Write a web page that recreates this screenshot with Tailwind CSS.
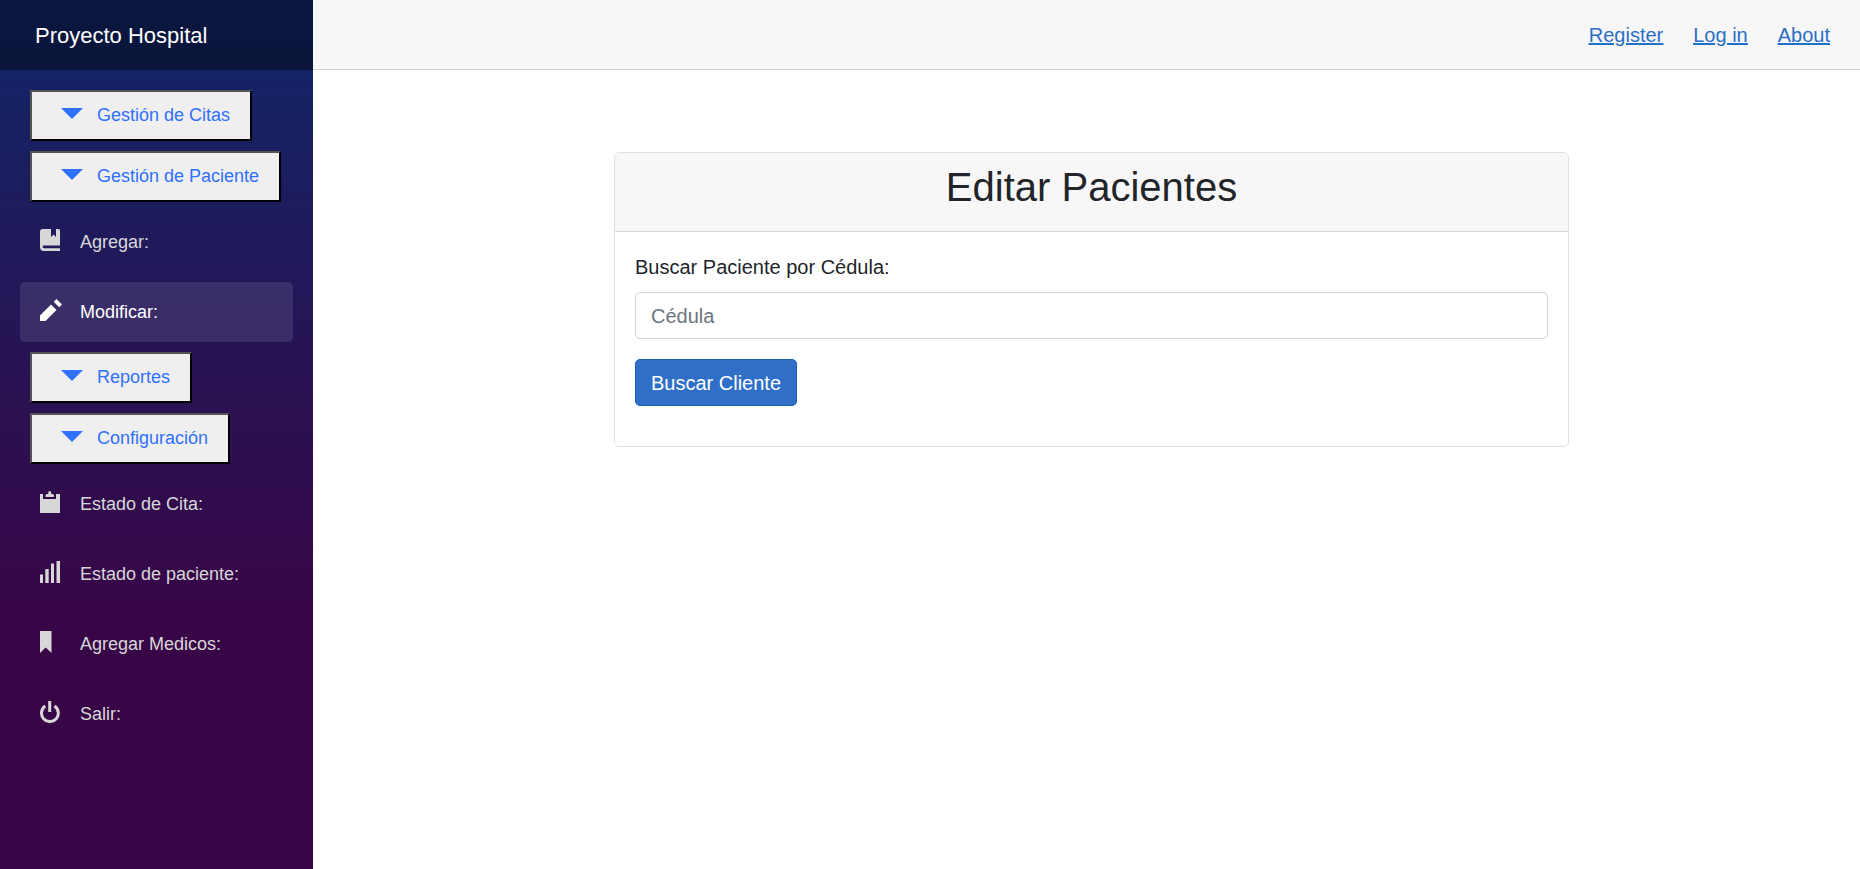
<!DOCTYPE html>
<html lang="es">
<head>
<meta charset="utf-8">
<title>Proyecto Hospital</title>
<script src="https://cdn.jsdelivr.net/npm/@tailwindcss/browser@4"></script>
</head>
<body class="flex h-screen overflow-hidden bg-white font-['Liberation_Sans',Arial,sans-serif] text-[20px] leading-[30px] text-[#212529]">
<aside class="flex w-[313px] shrink-0 flex-col bg-[linear-gradient(180deg,#0f2768_0%,#380647_70%)] text-[18px] text-[#d7d7d7]">
  <div class="flex h-[70px] shrink-0 items-center bg-black/40 pt-[2px] pl-[35px] text-[22px] text-white">Proyecto Hospital</div>
  <nav class="flex flex-col items-start gap-[10px] px-5 pt-5">
    <button class="ml-[10px] flex h-[51px] items-center border-2 border-black bg-[#efefef] pr-[20px] pb-[2px] pl-[29px] text-[#3070ff] [border-style:outset]"><svg class="mr-[14px] mb-[2px] h-[11px] w-[22px]" viewBox="0 0 8 4" fill="currentColor"><path d="M0 0l4 4 4-4z"/></svg>Gestión de Citas</button>
    <button class="ml-[10px] flex h-[51px] items-center border-2 border-black bg-[#efefef] pr-[20px] pb-[2px] pl-[29px] text-[#3070ff] [border-style:outset]"><svg class="mr-[14px] mb-[2px] h-[11px] w-[22px]" viewBox="0 0 8 4" fill="currentColor"><path d="M0 0l4 4 4-4z"/></svg>Gestión de Paciente</button>
    <a class="flex h-[60px] w-full items-center rounded-[5px] pl-5"><svg class="mr-[18px] mb-1 size-[22px]" viewBox="0 0 22 22" fill="currentColor"><path d="M2.5 0H11v8l2.6-2.6L16 8V0h2.500Q20 0 20 1.500V16.500H4a1.300 1.300 0 0 0 0 2.700H20V22H4Q0 22 0 18V3Q0 0 2.500 0z"/></svg>Agregar:</a>
    <a class="flex h-[60px] w-full items-center rounded-[5px] bg-white/10 pl-5 text-white"><svg class="mr-[18px] mb-1 size-[22px]" viewBox="0 0 8 8" fill="currentColor"><path d="M6 0l-1 1 2 2 1-1-2-2zm-2 2l-4 4v2h2l4-4-2-2z"/></svg>Modificar:</a>
    <button class="ml-[10px] flex h-[51px] items-center border-2 border-black bg-[#efefef] pr-[20px] pb-[2px] pl-[29px] text-[#3070ff] [border-style:outset]"><svg class="mr-[14px] mb-[2px] h-[11px] w-[22px]" viewBox="0 0 8 4" fill="currentColor"><path d="M0 0l4 4 4-4z"/></svg>Reportes</button>
    <button class="ml-[10px] flex h-[51px] items-center border-2 border-black bg-[#efefef] pr-[20px] pb-[2px] pl-[29px] text-[#3070ff] [border-style:outset]"><svg class="mr-[14px] mb-[2px] h-[11px] w-[22px]" viewBox="0 0 8 4" fill="currentColor"><path d="M0 0l4 4 4-4z"/></svg>Configuración</button>
    <a class="flex h-[60px] w-full items-center pl-5"><svg class="mr-[18px] mb-1 size-[22px]" viewBox="0 0 22 22" fill="currentColor"><path d="M0 3h3v5h13V3h4v19H0zM8.300 3V1.500Q8.300 0 9.700 0T11.200 1.500V3H12.500Q14 3 14 4.500V6H5.500V4.500Q5.500 3 7 3z"/></svg>Estado de Cita:</a>
    <a class="flex h-[60px] w-full items-center pl-5"><svg class="mr-[18px] mb-1 size-[22px]" viewBox="0 0 22 22" fill="currentColor"><path d="M0 13.500h3V22H0zM5.300 8h3.400v14H5.300zM11 2.500h3V22h-3zM16.500 0h3.500v22h-3.500z"/></svg>Estado de paciente:</a>
    <a class="flex h-[60px] w-full items-center pl-5"><svg class="mr-[18px] mb-1 size-[22px]" viewBox="0 0 22 22" fill="currentColor"><path d="M0 0h11.500v22l-5.750-5.500L0 22z"/></svg>Agregar Medicos:</a>
    <a class="flex h-[60px] w-full items-center pl-5"><svg class="mr-[18px] mb-1 size-[22px]" viewBox="0 0 22 22" fill="none" stroke="currentColor" stroke-width="3"><path d="M9.700 0v11M5.300 5.100a8.400 8.400 0 1 0 9.200 0"/></svg>Salir:</a>
  </nav>
</aside>
<main class="flex flex-1 flex-col">
  <header class="flex h-[70px] items-center justify-end gap-[30px] border-b border-[#d6d5d5] bg-[#f7f7f7] pr-[30px] text-[#2b6fc6] underline decoration-[#1f72c8] decoration-2">
    <a>Register</a><a>Log in</a><a>About</a>
  </header>
  <section class="mt-[82px] ml-[301px] h-[295px] w-[955px] rounded-[5px] border border-[#dfdfdf]">
    <div class="h-[79px] rounded-t-[4px] border-b border-[#d8d8d8] bg-[#f7f7f7] pt-[10px] text-center">
      <h1 class="text-[40px] leading-[48px]">Editar Pacientes</h1>
    </div>
    <form class="px-5 pt-5">
      <label class="block">Buscar Paciente por Cédula:</label>
      <input class="mt-[10px] block h-[47px] w-full rounded-[5px] border border-[#ced4da] px-[15px] pt-[2px] placeholder:text-[#6c757d]" placeholder="Cédula">
      <button type="button" class="mt-5 h-[47px] w-[162px] rounded-[5px] border border-[#1861ac] bg-[#2f6fc7] text-white">Buscar Cliente</button>
    </form>
  </section>
</main>
</body>
</html>
